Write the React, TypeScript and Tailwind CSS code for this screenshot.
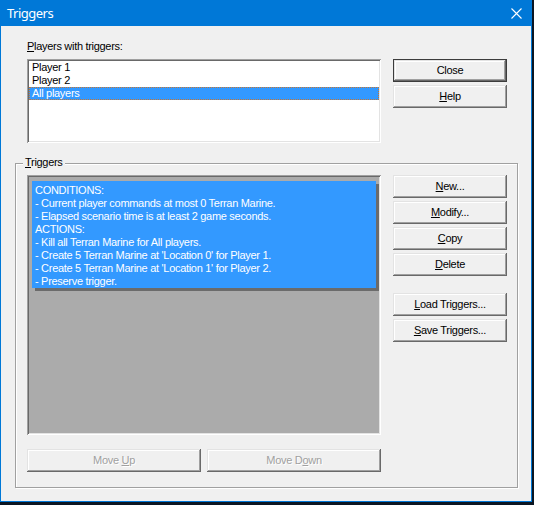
import type { ReactNode } from "react";

const bevel =
  "shadow-[inset_-1px_-1px_#696969,inset_1px_1px_#e3e3e3,inset_-2px_-2px_#a0a0a0,inset_2px_2px_#ffffff]";
const sunken =
  "shadow-[inset_1px_1px_#a0a0a0,inset_-1px_-1px_#ffffff,inset_2px_2px_#696969,inset_-2px_-2px_#e3e3e3]";

function Btn({
  children,
  className = "",
  isDefault = false,
  disabled = false,
}: {
  children: ReactNode;
  className?: string;
  isDefault?: boolean;
  disabled?: boolean;
}) {
  const face = (
    <div
      className={`flex h-full w-full items-center justify-center ${bevel} ${
        disabled ? "text-[#a0a0a0] [text-shadow:1px_1px_0_#ffffff]" : "text-black"
      }`}
    >
      <span className="leading-[13px]">{children}</span>
    </div>
  );
  return (
    <div className={`h-[23px] ${className} ${isDefault ? "border border-[#3c3c3c]" : ""}`}>{face}</div>
  );
}

const triggerLines = [
  "CONDITIONS:",
  "- Current player commands at most 0 Terran Marine.",
  "- Elapsed scenario time is at least 2 game seconds.",
  "ACTIONS:",
  "- Kill all Terran Marine for All players.",
  "- Create 5 Terran Marine at 'Location 0' for Player 1.",
  "- Create 5 Terran Marine at 'Location 1' for Player 2.",
  "- Preserve trigger.",
];

export default function App() {
  return (
    <div className="w-[534px] h-[505px] bg-[#0b1622] font-['Liberation_Sans',Arial,sans-serif] text-[11px] tracking-[-0.3px]">
      <div className="flex h-[502px] w-[532px] flex-col border-x border-b border-[#0078d7] bg-[#f0f0f0]">
        {/* title bar */}
        <div className="flex h-[26px] shrink-0 items-center justify-between bg-[#0078d7] pl-[6px] pr-[9px]">
          <span className="font-['Noto_Sans',sans-serif] text-[13px] leading-[16px] tracking-[-0.5px] text-white">
            Triggers
          </span>
          <svg width="11" height="11" viewBox="0 0 11 11" className="block">
            <path d="M0.5 0.5L10.5 10.5M10.5 0.5L0.5 10.5" stroke="#fff" strokeWidth="1.1" />
          </svg>
        </div>

        {/* players */}
        <div className="flex pl-[26px] pt-[14px]">
          <div className="w-[354px]">
            <div className="h-[13px] leading-[13px]">
              <u>P</u>layers with triggers:
            </div>
            <div className={`mt-[6px] h-[84px] bg-white p-[2px] ${sunken}`}>
              <div className="h-[13px] pl-[3px] leading-[13px]">Player 1</div>
              <div className="h-[13px] pl-[3px] leading-[13px]">Player 2</div>
              <div className="h-[13px] bg-[#3399ff] pl-[3px] leading-[13px] text-white outline outline-1 outline-dotted -outline-offset-1 outline-[#c8752f]">
                All players
              </div>
            </div>
          </div>
          <div className="ml-[12px] mt-[19px] flex flex-col gap-[3px]">
            <Btn className="w-[114px]" isDefault>
              Close
            </Btn>
            <Btn className="w-[114px]">
              <u>H</u>elp
            </Btn>
          </div>
        </div>

        {/* triggers group */}
        <div className="relative ml-[14px] mt-[20px] h-[325px] w-[503px] border border-[#a0a0a0] pl-[11px] pt-[11px] shadow-[inset_1px_1px_#ffffff,1px_1px_#ffffff]">
          <span className="absolute -top-[8px] left-[7px] bg-[#f0f0f0] px-[2px] leading-[13px]">
            <u>T</u>riggers
          </span>
          <div className="flex">
            <div className="w-[354px]">
              <div className={`h-[260px] bg-[#ababab] p-[2px] ${sunken}`}>
                <div className="ml-[3px] mt-[4px] w-[344px] bg-[#3399ff] pl-[3px] pt-[3px] text-white shadow-[3px_3px_0_#6b6b6b]">
                  {triggerLines.map((l) => (
                    <div key={l} className="h-[13px] whitespace-pre leading-[13px]">
                      {l}
                    </div>
                  ))}
                </div>
              </div>
              <div className="mt-[14px] flex gap-[6px]">
                <Btn className="w-[174px]" disabled>
                  Move <u>U</u>p
                </Btn>
                <Btn className="w-[174px]" disabled>
                  Move D<u>o</u>wn
                </Btn>
              </div>
            </div>
            <div className="ml-[12px] flex flex-col">
              <Btn className="w-[114px]">
                <u>N</u>ew...
              </Btn>
              <Btn className="mt-[3px] w-[114px]">
                <u>M</u>odify...
              </Btn>
              <Btn className="mt-[3px] w-[114px]">
                <u>C</u>opy
              </Btn>
              <Btn className="mt-[3px] w-[114px]">
                <u>D</u>elete
              </Btn>
              <Btn className="mt-[17px] w-[114px]">
                <u>L</u>oad Triggers...
              </Btn>
              <Btn className="mt-[3px] w-[114px]">
                <u>S</u>ave Triggers...
              </Btn>
            </div>
          </div>
        </div>
      </div>
    </div>
  );
}
